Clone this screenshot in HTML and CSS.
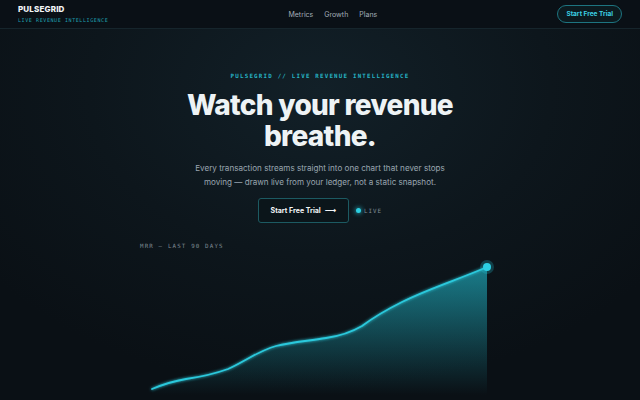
FILE: index.html
```html
<!DOCTYPE html>
<html lang="en">
<head>
<meta charset="utf-8">
<title>PulseGrid</title>
<link rel="stylesheet" href="styles.css">
</head>
<body>
<header class="nav">
  <div class="brand">
    <div class="brand-name">PULSEGRID</div>
    <div class="brand-sub">LIVE REVENUE INTELLIGENCE</div>
  </div>
  <nav class="links">
    <a href="#">Metrics</a>
    <a href="#">Growth</a>
    <a href="#">Plans</a>
  </nav>
  <a class="nav-cta" href="#">Start Free Trial</a>
</header>
<main class="hero">
  <div class="eyebrow">PULSEGRID // LIVE REVENUE INTELLIGENCE</div>
  <h1 class="title">Watch your revenue<br>breathe.</h1>
  <p class="lead">Every transaction streams straight into one chart that never stops<br>moving — drawn live from your ledger, not a static snapshot.</p>
  <div class="actions">
    <a class="cta" href="#">Start Free Trial <span class="arrow">⟶</span></a>
    <span class="live"><span class="dot"></span>LIVE</span>
  </div>
  <section class="chart">
    <div class="chart-label">MRR — LAST 90 DAYS</div>
    <svg class="chart-svg" width="360" height="150" viewBox="0 0 360 150">
      <defs>
        <linearGradient id="fill" x1="0" y1="12" x2="0" y2="140" gradientUnits="userSpaceOnUse">
          <stop offset="0" stop-color="#22c3d6" stop-opacity="0.6"/>
          <stop offset="1" stop-color="#22c3d6" stop-opacity="0"/>
        </linearGradient>
        <filter id="glow" x="-20%" y="-20%" width="140%" height="140%">
          <feGaussianBlur stdDeviation="1.6" result="b"/>
          <feMerge><feMergeNode in="b"/><feMergeNode in="SourceGraphic"/></feMerge>
        </filter>
      </defs>
      <path d="M12,134 C24,129 34,126 46,124 C60,122 74,119 88,114 C104,107 118,96 136,91 C152,87 168,86 186,83 C200,81 210,78 222,71 C234,62 244,56 262,47 C290,33 320,24 347,12 L347,145 L12,145 Z" fill="url(#fill)"/>
      <path d="M12,134 C24,129 34,126 46,124 C60,122 74,119 88,114 C104,107 118,96 136,91 C152,87 168,86 186,83 C200,81 210,78 222,71 C234,62 244,56 262,47 C290,33 320,24 347,12" fill="none" stroke="#2cc9dc" stroke-width="1.8" stroke-linecap="round" filter="url(#glow)"/>
      <circle cx="347" cy="12" r="7" fill="#22c3d6" opacity="0.25"/>
      <circle cx="347" cy="12" r="4" fill="#2cd0e4"/>
    </svg>
  </section>
</main>
</body>
</html>
```

FILE: styles.css
```css
* { box-sizing: border-box; }
html, body { margin: 0; padding: 0; }
body {
  width: 640px;
  height: 400px;
  overflow: hidden;
  font-family: Inter, "Noto Sans", sans-serif;
  color: #e8eef2;
  background: radial-gradient(ellipse 420px 300px at 320px 90px, #122028 0%, #0d161c 55%, #0a1015 100%);
}
a { text-decoration: none; color: inherit; }

.nav {
  height: 29px;
  display: flex;
  align-items: center;
  justify-content: space-between;
  padding: 0 18px;
  background: #0a1016;
  border-bottom: 1px solid #16252c;
}
.brand { display: flex; flex-direction: column; gap: 3px; }
.brand-name { font-size: 8px; font-weight: 800; letter-spacing: 0.02em; color: #f2f5f7; line-height: 9px; }
.brand-sub { font-family: "DejaVu Sans Mono", monospace; font-size: 5px; letter-spacing: 0.12em; color: #1f9fae; line-height: 6px; }
.links { display: flex; gap: 11px; font-size: 7px; color: #a3adb6; }
.nav-cta {
  height: 18px;
  padding: 0 8px;
  border: 1px solid #1d7480;
  border-radius: 9px;
  display: flex;
  align-items: center;
  font-size: 6.5px;
  font-weight: 700;
  color: #3cd2e4;
  background: #0c1a1f;
}

.hero { display: flex; flex-direction: column; align-items: center; padding-top: 43px; }
.eyebrow {
  font-family: "DejaVu Sans Mono", monospace;
  font-size: 5.8px;
  letter-spacing: 0.21em;
  color: #26b3c3;
  font-weight: 700;
  line-height: 8px;
}
.title {
  margin: 10px 0 0;
  font-size: 28px;
  line-height: 31px;
  font-weight: 800;
  letter-spacing: -0.025em;
  text-align: center;
  color: #eef3f5;
}
.lead {
  margin: 9px 0 0;
  font-size: 8.1px;
  line-height: 14px;
  color: #9aa6b0;
  text-align: center;
}
.actions { margin-top: 9px; display: flex; align-items: center; gap: 7px; }
.cta {
  height: 25px;
  width: 91px;
  display: flex;
  align-items: center;
  justify-content: center;
  gap: 4px;
  border: 1px solid #1c5a62;
  border-radius: 3px;
  background: #0b151a;
  font-size: 7px;
  font-weight: 700;
  color: #f1f4f6;
}
.arrow { font-size: 8px; font-family: "DejaVu Sans", sans-serif; }
.live {
  display: flex;
  align-items: center;
  gap: 3px;
  font-family: "DejaVu Sans Mono", monospace;
  font-size: 5.8px;
  letter-spacing: 0.18em;
  color: #7f8d97;
}
.dot {
  width: 5px; height: 5px; border-radius: 50%;
  background: #2ccfe2;
  box-shadow: 0 0 4px 1px rgba(44, 207, 226, 0.55);
}
.chart { width: 360px; margin-top: 19px; }
.chart-label {
  font-family: "DejaVu Sans Mono", monospace;
  font-size: 5.8px;
  letter-spacing: 0.2em;
  color: #7e8a93;
  line-height: 8px;
}
.chart-svg { display: block; margin-top: 5px; }
```
